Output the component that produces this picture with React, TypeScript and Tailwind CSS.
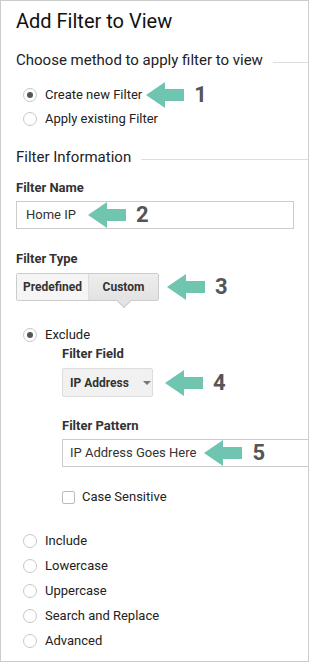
import React from "react";

function Arrow({ n }: { n: string }) {
  return (
    <span className="flex items-center">
      <svg width="38" height="26" viewBox="0 0 38 26" className="shrink-0">
        <polygon points="0,13 19,0 19,7 38,7 38,19 19,19 19,26" fill="#6fc5b0" />
      </svg>
      <span className="ml-[10px] text-[22px] font-bold leading-none text-[#555]">{n}</span>
    </span>
  );
}

function Radio({ checked = false }: { checked?: boolean }) {
  return (
    <span className="ml-[7px] flex h-[14px] w-[14px] shrink-0 items-center justify-center rounded-full border border-[#c8c8c8] bg-white">
      {checked && <span className="h-[6px] w-[6px] rounded-full bg-[#555]" />}
    </span>
  );
}

function RadioRow({ label, checked, className = "h-[24px]", children }: { label: string; checked?: boolean; className?: string; children?: React.ReactNode }) {
  return (
    <div className={`flex items-center ${className}`}>
      <Radio checked={checked} />
      <span className="ml-[8px] text-[13px] text-[#222]">{label}</span>
      {children}
    </div>
  );
}

function SectionHeader({ text, className }: { text: string; className: string }) {
  return (
    <div className={`flex h-[20px] items-center ${className}`}>
      <span className="text-[15px] leading-[20px] text-[#222]">{text}</span>
      <span className="ml-[10px] mt-[4px] h-px flex-1 bg-[#ddd]" />
    </div>
  );
}

function Label({ text, className }: { text: string; className: string }) {
  return <div className={`h-[18px] text-[13px] font-bold leading-[18px] text-[#333] ${className}`}>{text}</div>;
}

export default function App() {
  return (
    <div
      className="h-[662px] w-[309px] overflow-hidden border border-[#ccc] bg-white pl-[15px]"
      style={{ fontFamily: "Roboto, 'Liberation Sans', sans-serif" }}
    >
      <h1 className="mt-[8px] h-[24px] text-[20px] leading-[24px] text-[#111]">Add Filter to View</h1>

      <SectionHeader text="Choose method to apply filter to view" className="mt-[17px]" />
      <div className="mt-[13px]">
        <RadioRow label="Create new Filter" checked>
          <span className="ml-[4px]">
            <Arrow n="1" />
          </span>
        </RadioRow>
        <RadioRow label="Apply existing Filter" />
      </div>

      <SectionHeader text="Filter Information" className="mt-[16px]" />

      <Label text="Filter Name" className="mt-[12px]" />
      <div className="mt-[4px] flex h-[28px] w-[278px] items-center border border-[#ccc] pl-[9px]">
        <span className="text-[13px] text-[#333]">Home IP</span>
        <span className="ml-[12px]">
          <Arrow n="2" />
        </span>
      </div>

      <Label text="Filter Type" className="mt-[21px]" />
      <div className="mt-[5px] flex items-center">
        <div className="flex h-[28px] rounded-[2px] border border-[#ccc] text-[12px] font-bold text-[#333]">
          <span className="flex w-[71px] items-center justify-center bg-[#f5f5f5]">Predefined</span>
          <span className="relative flex w-[70px] items-center justify-center border-l border-[#ddd] bg-gradient-to-b from-[#eee] to-[#e2e2e2]">
            Custom
            <span className="absolute -bottom-[6px] left-[30px] h-[10px] w-[10px] rotate-45 border-b border-r border-[#ccc] bg-[#e4e4e4]" />
          </span>
        </div>
        <span className="ml-[8px]">
          <Arrow n="3" />
        </span>
      </div>

      <RadioRow label="Exclude" checked className="mt-[24px] h-[20px]" />
      <div className="ml-[46px]">
        <Label text="Filter Field" />
        <div className="mt-[5px] flex items-center">
          <div className="flex h-[29px] w-[91px] items-center rounded-[2px] border border-[#ddd] bg-[#f1f1f1] pl-[7px]">
            <span className="text-[12px] font-bold text-[#333]">IP Address</span>
            <svg width="8" height="4" viewBox="0 0 8 4" className="ml-[14px]">
              <polygon points="0,0 8,0 4,4" fill="#777" />
            </svg>
          </div>
          <span className="ml-[12px]">
            <Arrow n="4" />
          </span>
        </div>

        <Label text="Filter Pattern" className="mt-[20px]" />
        <div className="mt-[4px] flex h-[28px] w-[260px] items-center border border-[#ccc] pl-[7px]">
          <span className="text-[13px] text-[#333]">IP Address Goes Here</span>
          <span className="ml-[8px]">
            <Arrow n="5" />
          </span>
        </div>

        <div className="mt-[20px] flex h-[20px] items-center">
          <span className="h-[13px] w-[13px] rounded-[2px] border border-[#bbb] bg-white" />
          <span className="ml-[7px] text-[13px] text-[#222]">Case Sensitive</span>
        </div>
      </div>

      <div className="mt-[21px]">
        {["Include", "Lowercase", "Uppercase", "Search and Replace", "Advanced"].map((t) => (
          <RadioRow key={t} label={t} className="h-[25px]" />
        ))}
      </div>
    </div>
  );
}
